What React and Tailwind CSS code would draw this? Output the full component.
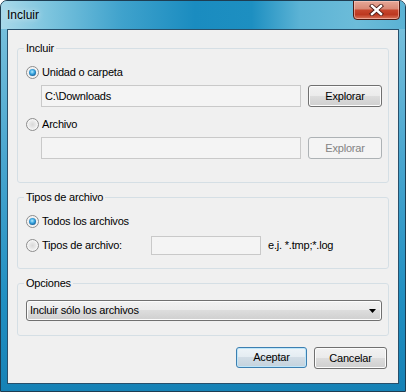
import React from "react";

function Radio({ checked, label }) {
  return (
    <label className="flex items-center gap-[3px] h-[14px]">
      <span className="w-[13px] h-[13px] shrink-0 rounded-full border border-[#8d8d8d] bg-[radial-gradient(circle_at_50%_50%,#d8d8d8_0%,#eeeeee_55%,#fbfbfb_100%)] shadow-[inset_0_0_0_1px_#f6f6f6] flex items-center justify-center">
        {checked && (
          <span className="w-[7px] h-[7px] rounded-full bg-[radial-gradient(circle_at_45%_40%,#b6ecff_0%,#3aa6e0_40%,#16609a_75%,#0d3d66_100%)]" />
        )}
      </span>
      <span>{label}</span>
    </label>
  );
}

function Button({ children, disabled, primary, className = "" }) {
  if (disabled) {
    return (
      <button
        disabled
        className={`h-[22px] rounded-[3px] border border-[#adb2b5] bg-[#f4f4f4] text-[#838383] ${className}`}
      >
        {children}
      </button>
    );
  }
  if (primary) {
    return (
      <button
        className={`h-[21px] rounded-[3px] border border-[#3c7fb1] bg-[linear-gradient(#eef4f8_0%,#e4ecf2_49%,#d2dde6_50%,#c4d2dd_100%)] shadow-[inset_0_0_0_1px_#bfe6f9] ${className}`}
      >
        {children}
      </button>
    );
  }
  return (
    <button
      className={`h-[22px] rounded-[3px] border border-[#707070] bg-[linear-gradient(#f2f2f2_0%,#ebebeb_49%,#dddddd_50%,#cfcfcf_100%)] shadow-[inset_0_0_0_1px_#fcfcfc] ${className}`}
    >
      {children}
    </button>
  );
}

function Group({ title, className = "", children }) {
  return (
    <fieldset className={`border border-[#d5dfe5] rounded-[3px] ${className}`}>
      <legend className="ml-[6px] px-[2px] leading-[14px]">{title}</legend>
      {children}
    </fieldset>
  );
}

export default function App() {
  return (
    <div className="w-[406px] h-[392px] rounded-t-[7px] border border-[#1e3d52] bg-[linear-gradient(180deg,#7fc4de_0%,#4aa6cf_40%,#2290c2_75%,#1682b6_100%)] overflow-hidden font-['Liberation_Sans',Arial,sans-serif] text-[11px] tracking-[-0.2px] text-black">
      <div className="h-[28px] flex items-start justify-between bg-[linear-gradient(90deg,#a9d9ea_0%,#7cc4de_12%,#3fa2cc_30%,#1a8cc0_48%,#1d8fc1_62%,#5cb3d5_74%,#6cbcd9_88%,#5ab2d4_100%)]">
        <span className="mt-[6px] ml-[6px] text-[12px] leading-[16px] tracking-normal [text-shadow:0_0_6px_rgba(255,255,255,0.9)]">
          Incluir
        </span>
        <button className="-mt-px mr-[5px] w-[47px] h-[20px] rounded-b-[4px] border border-[#4e1a12] bg-[linear-gradient(#e6a898_0%,#d98a77_42%,#c6452c_52%,#bd3820_75%,#d8755b_100%)] shadow-[inset_0_0_0_1px_rgba(255,210,200,0.55)] flex items-center justify-center">
          <svg width="15" height="12" viewBox="0 0 15 12">
            <path d="M3 2 L12 10 M12 2 L3 10" stroke="#4a1a14" strokeWidth="4.2" strokeLinecap="square" />
            <path d="M3 2 L12 10 M12 2 L3 10" stroke="#ffffff" strokeWidth="2.4" strokeLinecap="square" />
          </svg>
        </button>
      </div>

      <div className="mx-[6px] h-[355px] border border-[#27506c] bg-[#f0f0f0]">
        <div className="px-[9px] pt-[11px]">
          <Group title="Incluir" className="pb-[23px]">
            <div className="pt-[10px] pl-[8px]">
              <Radio checked label="Unidad o carpeta" />
            </div>
            <div className="mt-[6px] pl-[23px] pr-[6px] flex gap-[7px]">
              <div className="w-[260px] h-[22px] border border-[#c9c9c9] bg-[#f4f4f4] pl-[3px] flex items-center">
                C:\Downloads
              </div>
              <Button className="w-[74px]">Explorar</Button>
            </div>
            <div className="mt-[10px] pl-[8px]">
              <Radio label="Archivo" />
            </div>
            <div className="mt-[6px] pl-[23px] pr-[6px] flex gap-[7px]">
              <div className="w-[260px] h-[22px] border border-[#c9c9c9] bg-[#f4f4f4]" />
              <Button disabled className="w-[74px]">Explorar</Button>
            </div>
          </Group>

          <Group title="Tipos de archivo" className="mt-[7px] pb-[13px]">
            <div className="pt-[10px] pl-[8px]">
              <Radio checked label="Todos los archivos" />
            </div>
            <div className="mt-[8px] pl-[8px] flex items-center h-[19px]">
              <div className="w-[125px]">
                <Radio label="Tipos de archivo:" />
              </div>
              <div className="w-[110px] h-[19px] border border-[#c9c9c9] bg-[#f4f4f4]" />
              <span className="ml-[7px]">e.j. *.tmp;*.log</span>
            </div>
          </Group>

          <Group title="Opciones" className="mt-[7px] pb-[14px]">
            <div className="pt-[10px] pl-[8px] pr-[6px]">
              <div className="h-[21px] rounded-[3px] border border-[#707070] bg-[linear-gradient(#f2f2f2_0%,#ebebeb_49%,#dddddd_50%,#cfcfcf_100%)] shadow-[inset_0_0_0_1px_#fcfcfc] flex items-center justify-between pl-[3px] pr-[5px]">
                <span>Incluir sólo los archivos</span>
                <svg width="7" height="4" viewBox="0 0 7 4">
                  <path d="M0 0 H7 L3.5 4 Z" fill="#000" />
                </svg>
              </div>
            </div>
          </Group>

          <div className="mt-[11px] pr-[2px] flex justify-end gap-[7px]">
            <Button primary className="w-[71px]">Aceptar</Button>
            <Button className="w-[73px] h-[21px]">Cancelar</Button>
          </div>
        </div>
      </div>
    </div>
  );
}
